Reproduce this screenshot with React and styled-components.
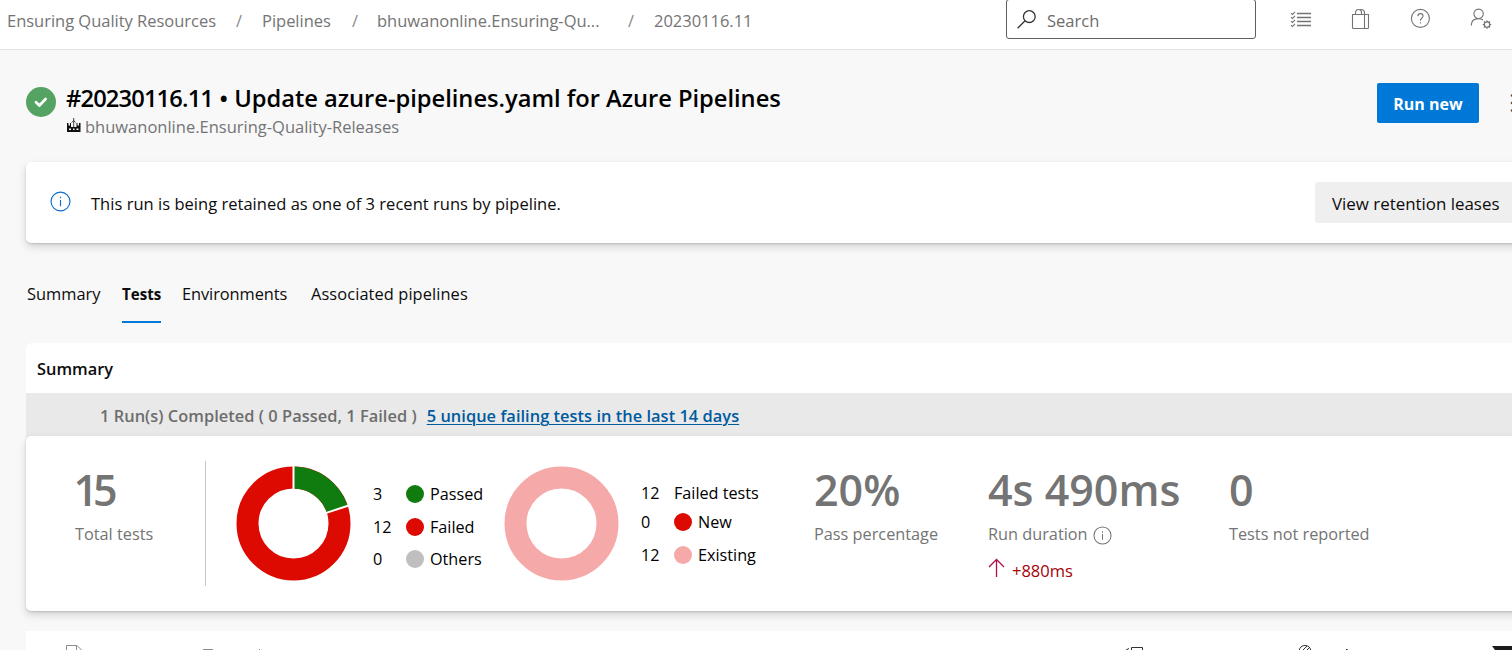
import React from 'react';
import styled, { createGlobalStyle } from 'styled-components';

const Global = createGlobalStyle`
  * { box-sizing: border-box; }
  body { margin: 0; overflow: hidden; }
`;

const Page = styled.div`
  display: flex;
  flex-direction: column;
  width: 1512px;
  height: 650px;
  overflow: hidden;
  background: #f8f8f8;
  color: #0c0c0c;
  font: 400 16.5px/20px "Open Sans", "Noto Sans", sans-serif;
  white-space: nowrap;
`;

const TopBar = styled.header`
  display: flex;
  flex: none;
  height: 50px;
  padding-left: 7px;
  background: #fff;
  border-bottom: 1px solid #e1e1e1;
`;

const Crumbs = styled.nav`
  display: flex;
  width: 999px;
  padding-top: 11px;
  color: #747474;
  letter-spacing: -0.02px;
`;

const Crumb = styled.span`
  width: ${(p) => p.$width}px;
`;

const Slash = styled.span`
  width: ${(p) => p.$width}px;
  color: #8a8a8a;
`;

const SearchBox = styled.div`
  display: flex;
  width: 250px;
  height: 40px;
  margin-top: -1px;
  padding: 11px 0 0 10px;
  gap: 11px;
  border: 1px solid #5f5f5f;
  border-radius: 3px;
  color: #6c6c6c;
`;

const SearchIcon = styled.svg`
  width: 19px;
  height: 20px;
  margin-top: -2px;
`;

const ToolIcons = styled.div`
  display: flex;
  gap: 36px;
  padding: 7px 0 0 33px;
`;

const ToolIcon = styled.svg`
  width: 24px;
  height: 24px;
  fill: none;
  stroke: #747474;
  stroke-width: 1.1;
`;

const RunHeader = styled.section`
  display: flex;
  flex: none;
  height: 112px;
  padding: 33px 0 0 26px;
`;

const StatusIcon = styled.svg`
  flex: none;
  width: 30px;
  height: 30px;
  margin-top: 4px;
`;

const RunTitles = styled.div`
  flex: none;
  width: 1321px;
  padding-left: 10px;
`;

const Title = styled.h1`
  margin: 0;
  font-size: 23.7px;
  font-weight: 600;
  line-height: 30px;
  letter-spacing: -0.02px;
  color: #000;
`;

const RunNumber = styled.span`
  letter-spacing: -0.85px;
`;

const RepoLine = styled.div`
  display: flex;
  gap: 4px;
  margin-top: 4px;
  color: #747474;
`;

const RepoIcon = styled.svg`
  width: 14px;
  height: 15px;
  margin: 1px 0 0 1px;
`;

const PrimaryButton = styled.button`
  flex: none;
  width: 102px;
  height: 40px;
  padding: 1px 0 0;
  border: 0;
  border-radius: 2px;
  background: #0078d7;
  color: #fff;
  font: 700 16px/20px "Open Sans", sans-serif;
`;

const MoreDots = styled.svg`
  flex: none;
  width: 4px;
  height: 20px;
  margin: 10px 0 0 31px;
  fill: #6b4a2a;
`;

const shadow = '0 4px 9px rgba(0, 0, 0, 0.15), 0 1px 2px rgba(0, 0, 0, 0.15)';

const Notice = styled.section`
  display: flex;
  flex: none;
  height: 81px;
  margin: 0 -20px 0 26px;
  padding: 20px 0 0 24px;
  background: #fff;
  border-radius: 5px;
  box-shadow: ${shadow};
`;

const InfoIcon = styled.svg`
  width: ${(p) => p.$size}px;
  height: ${(p) => p.$size}px;
  margin: ${(p) => p.$drop}px 0 ${(p) => -p.$drop}px;
  fill: none;
  stroke: ${(p) => p.$color};
  stroke-width: 1.1;
`;

const NoticeIcon = styled.div`
  display: flex;
  width: 41px;
  padding-top: 9px;
`;

const NoticeText = styled.div`
  width: 1224px;
  padding-top: 12px;
  letter-spacing: 0.025px;
`;

const SubtleButton = styled.button`
  width: 201px;
  height: 41px;
  padding: 2px 0 0 17px;
  border: 0;
  border-radius: 3px;
  background: #efefef;
  color: #0c0c0c;
  text-align: left;
  font: 500 16.9px/20px "Open Sans", sans-serif;
`;

const Tabs = styled.nav`
  display: flex;
  flex: none;
  height: 80px;
  margin-top: 20px;
  padding-left: 27px;
`;

const Tab = styled.div`
  height: 60px;
  width: ${(p) => p.$width}px;
  margin-right: ${(p) => p.$after}px;
  padding-top: 21px;
  letter-spacing: ${(p) => p.$tracking || 0}px;
  border-bottom: 2px solid ${(p) => (p.$active ? '#0078d7' : 'transparent')};
  font-weight: ${(p) => (p.$active ? 700 : 400)};
  font-size: ${(p) => (p.$active ? 15.1 : 16.4)}px;
`;

const SummaryCard = styled.section`
  flex: none;
  height: 268px;
  margin: 0 -20px 0 26px;
  background: #e9e9e9;
  border-radius: 5px;
`;

const CardTitle = styled.h2`
  height: 50px;
  margin: 0;
  padding: 16px 0 0 11px;
  font-size: 16.4px;
  font-weight: 600;
  line-height: 20px;
  background: #fff;
  border-radius: 5px 5px 0 0;
`;

const RunBand = styled.div`
  display: flex;
  height: 43px;
  gap: 10px;
  padding: 13px 0 0 74px;
  color: #6d6d6d;
  font-size: 16.4px;
  font-weight: 600;
  letter-spacing: 0.035px;
`;

const FailLink = styled.a`
  color: #005a9e;
  text-decoration: underline;
  text-decoration-thickness: 1px;
  text-underline-offset: 2px;
`;

const Stats = styled.div`
  display: flex;
  height: 175px;
  padding-top: 25px;
  background: #fff;
  border-radius: 5px;
  box-shadow: ${shadow};
`;

const Stat = styled.div`
  width: ${(p) => p.$width}px;
  color: #747474;
`;

const TotalStat = styled(Stat)`
  height: 125px;
  padding-left: 49px;
  border-right: 1px solid #c8c8c8;
`;

const Value = styled.div`
  margin-top: 4px;
  font-size: 43px;
  font-weight: 600;
  line-height: 50px;
  letter-spacing: ${(p) => p.$tracking || 0}px;
  text-indent: ${(p) => p.$indent || 0}px;
`;

const Label = styled.div`
  display: flex;
  height: 20px;
  gap: 5px;
  margin-top: 9px;
  font-size: 16.3px;
`;

const Delta = styled.div`
  display: flex;
  gap: 7px;
  margin-top: 17px;
  color: #a4000a;
`;

const DeltaArrow = styled.svg`
  width: 17px;
  height: 20px;
  margin-top: -3px;
  fill: none;
  stroke: #b0104e;
  stroke-width: 1.3;
`;

const Donut = styled.svg`
  width: 116px;
  height: 116px;
  margin: 5px 0 0 ${(p) => p.$before}px;
  fill: none;
  stroke-width: 22;
`;

const Legend = styled.div`
  display: grid;
  align-content: start;
  grid-template-columns: ${(p) => p.$columns};
  grid-template-rows: ${(p) => p.$rows};
  align-items: start;
  width: ${(p) => p.$width}px;
  margin-left: 21px;
  padding-top: ${(p) => p.$top}px;
  font-size: 16.2px;
  color: #000;
`;

const Dot = styled.span`
  width: 18px;
  height: 18px;
  margin-top: 1px;
  border-radius: 50%;
  background: ${(p) => p.$color};
`;

const LegendHeading = styled.span`
  grid-column: 2 / 4;
`;

const ResultsCard = styled.section`
  display: flex;
  flex: none;
  height: 19px;
  margin-top: 20px;
  margin-left: 26px;
  background: #fff;
`;

const ResultsIcons = styled.svg`
  width: 1486px;
  height: 19px;
  fill: none;
  stroke-width: 1;
`;

function Info({ size, color, drop = 0 }) {
  return (
    <InfoIcon $size={size} $color={color} $drop={drop} viewBox="0 0 20 20">
      <circle cx="10" cy="10" r="9" />
      <path d="M10 8.5V14.5M10 5.5V7" />
    </InfoIcon>
  );
}

function LegendRow({ count, color, name }) {
  return (
    <>
      <span>{count}</span>
      <Dot $color={color} />
      <span>{name}</span>
    </>
  );
}

export default function App() {
  return (
    <Page>
      <Global />
      <TopBar>
        <Crumbs>
          <Crumb $width={229}>Ensuring Quality Resources</Crumb>
          <Slash $width={26}>/</Slash>
          <Crumb $width={90}>Pipelines</Crumb>
          <Slash $width={25}>/</Slash>
          <Crumb $width={251}>bhuwanonline.Ensuring-Qu...</Crumb>
          <Slash $width={26}>/</Slash>
          <Crumb $width={100}>20230116.11</Crumb>
        </Crumbs>
        <SearchBox>
          <SearchIcon viewBox="0 0 19 20" fill="none" stroke="#333" strokeWidth="1.3">
            <circle cx="12.3" cy="7.6" r="5.9" />
            <path d="M8.1 11.8L.6 19.2" />
          </SearchIcon>
          <span>Search</span>
        </SearchBox>
        <ToolIcons>
          <ToolIcon viewBox="0 0 24 24">
            <path d="M8 6.5H22M8 10.5H22M8 14.5H22M8 18.5H22" strokeWidth="1.4" />
            <path d="M2 6.2L3.5 7.4L6 4.8M2 10.2L3.5 11.4L6 8.8M2 14.2L3.5 15.4L6 12.8M2 18.2L3.5 19.4L6 16.8" />
          </ToolIcon>
          <ToolIcon viewBox="0 0 24 24">
            <path d="M3.5 7.5H19.5V20.5Q19.5 21.5 18.5 21.5H4.5Q3.5 21.5 3.5 20.5ZM15.5 7.5V21.5" />
            <path d="M6.5 7.5V6Q6.5 2.5 9.5 2.5Q12.5 2.5 12.5 6V7.5M10.2 2.7Q11 2.5 12 2.5Q15.5 2.5 15.5 6V7.5" />
          </ToolIcon>
          <ToolIcon viewBox="0 0 24 24">
            <circle cx="11.4" cy="11.4" r="9" />
            <path d="M8.9 9.2Q8.9 6.6 11.5 6.6Q14 6.6 14 8.9Q14 10.3 12.7 11.2Q11.4 12.2 11.4 13.8M11.4 15.2V16.6" />
          </ToolIcon>
          <ToolIcon viewBox="0 0 24 24">
            <circle cx="9.6" cy="6.8" r="4.7" />
            <path d="M2.3 18.4Q2.3 11.6 9.6 11.6Q12.3 11.6 14 13" />
            <circle cx="18" cy="17.6" r="2.7" />
            <path d="M18 13.4V15M18 20.2V21.8M13.8 17.6H15.4M20.6 17.6H22.2M15 14.6L16.1 15.7M19.9 19.5L21 20.6M21 14.6L19.9 15.7M16.1 19.5L15 20.6" strokeWidth="1.4" />
          </ToolIcon>
        </ToolIcons>
      </TopBar>

      <RunHeader>
        <StatusIcon viewBox="0 0 30 30">
          <circle cx="15" cy="15" r="15" fill="#55a362" />
          <path d="M10 15.3L13.4 18.5L19.6 12" fill="none" stroke="#fff" strokeWidth="2.7" strokeLinecap="round" strokeLinejoin="round" />
        </StatusIcon>
        <RunTitles>
          <Title>
            <RunNumber>#20230116.11</RunNumber> • Update azure-pipelines.yaml for Azure Pipelines
          </Title>
          <RepoLine>
            <RepoIcon viewBox="0 0 14 15">
              <path d="M0 5H1.5V7.5H3V5H4V9H9.5V5H10.5V7.5H12V5H13.5V14H0Z" fill="#111" />
              <path d="M2 10.5H4V12H2ZM6 10.5H7.5V12H6ZM9.5 10.5H11.5V12H9.5Z" fill="#f8f8f8" />
              <path d="M6.7 0V9M4.8 4.5L6.7 2.5L8.6 4.5" fill="none" stroke="#444" strokeWidth="1" />
            </RepoIcon>
            <span>bhuwanonline.Ensuring-Quality-Releases</span>
          </RepoLine>
        </RunTitles>
        <PrimaryButton>Run new</PrimaryButton>
        <MoreDots viewBox="0 0 4 20">
          <circle cx="2" cy="2.5" r="1.3" />
          <circle cx="2" cy="10" r="1.3" />
          <circle cx="2" cy="17.5" r="1.3" />
        </MoreDots>
      </RunHeader>

      <Notice>
        <NoticeIcon>
          <Info size={21} color="#0f6fd0" />
        </NoticeIcon>
        <NoticeText>This run is being retained as one of 3 recent runs by pipeline.</NoticeText>
        <SubtleButton>View retention leases</SubtleButton>
      </Notice>

      <Tabs>
        <Tab $width={74} $after={21}>Summary</Tab>
        <Tab $active $width={39} $after={21}>Tests</Tab>
        <Tab $width={107} $after={22} $tracking={-0.08}>Environments</Tab>
        <Tab $width={158} $after={0} $tracking={0.09}>Associated pipelines</Tab>
      </Tabs>

      <SummaryCard>
        <CardTitle>Summary</CardTitle>
        <RunBand>
          <span>1 Run(s) Completed ( 0 Passed, 1 Failed )</span>
          <FailLink>5 unique failing tests in the last 14 days</FailLink>
        </RunBand>
        <Stats>
          <TotalStat $width={180}>
            <Value $tracking={-5} $indent={-1.5}>15</Value>
            <Label>Total tests</Label>
          </TotalStat>
          <Donut $before={30} viewBox="-57.5 -57.5 116 116">
            <circle r="46" stroke="#dc0a00" />
            <path d="M0 -46A46 46 0 0 1 43.75 -14.21" stroke="#107c10" />
            <path d="M0 -34V-58M32 -10.4L56 -18.2" stroke="#fff" strokeWidth="2" />
          </Donut>
          <Legend $width={131} $top={22.5} $columns="33px 24px auto" $rows="33px 32px 32px">
            <LegendRow count="3" color="#107c10" name="Passed" />
            <LegendRow count="12" color="#dc0a00" name="Failed" />
            <LegendRow count="0" color="#bfbfbf" name="Others" />
          </Legend>
          <Donut $before={0} viewBox="-57.5 -57.5 116 116">
            <circle r="46" stroke="#f6a9a9" />
          </Donut>
          <Legend $width={173} $top={22} $columns="33px 24px auto" $rows="29px 33px 32px">
            <span>12</span>
            <LegendHeading>Failed tests</LegendHeading>
            <LegendRow count="0" color="#dc0a00" name="New" />
            <LegendRow count="12" color="#f6a9a9" name="Existing" />
          </Legend>
          <Stat $width={174}>
            <Value>20%</Value>
            <Label>Pass percentage</Label>
          </Stat>
          <Stat $width={241}>
            <Value>4s 490ms</Value>
            <Label>
              <span>Run duration</span>
              <Info size={19} color="#747474" drop={2} />
            </Label>
            <Delta>
              <DeltaArrow viewBox="0 0 17 20">
                <path d="M8.5 1.5V19M1 9L8.5 1.5L16 9" />
              </DeltaArrow>
              <span>+880ms</span>
            </Delta>
          </Stat>
          <Stat $width={180}>
            <Value>0</Value>
            <Label>Tests not reported</Label>
          </Stat>
        </Stats>
      </SummaryCard>

      <ResultsCard>
        <ResultsIcons viewBox="0 0 1486 19">
          <path d="M40.5 20V14.5H51L56 19.5M50.5 14.5V19.5H56" stroke="#8c8c8c" />
          <path d="M177 18.5H187M233 18.5H234" stroke="#8a8a8a" />
          <path d="M1100 19L1103 17.5M1105.5 20V16.5H1116.5V20" stroke="#333" />
          <path d="M1273 20Q1274 14.5 1279 14.5Q1284 14.5 1285 20M1276 20L1281 15M1280 20L1284 16" stroke="#333" />
          <path d="M1320 18.5H1321.5" stroke="#222" />
          <path d="M1466 15H1486V19H1469Z" fill="#1b1b1b" />
        </ResultsIcons>
      </ResultsCard>
    </Page>
  );
}
